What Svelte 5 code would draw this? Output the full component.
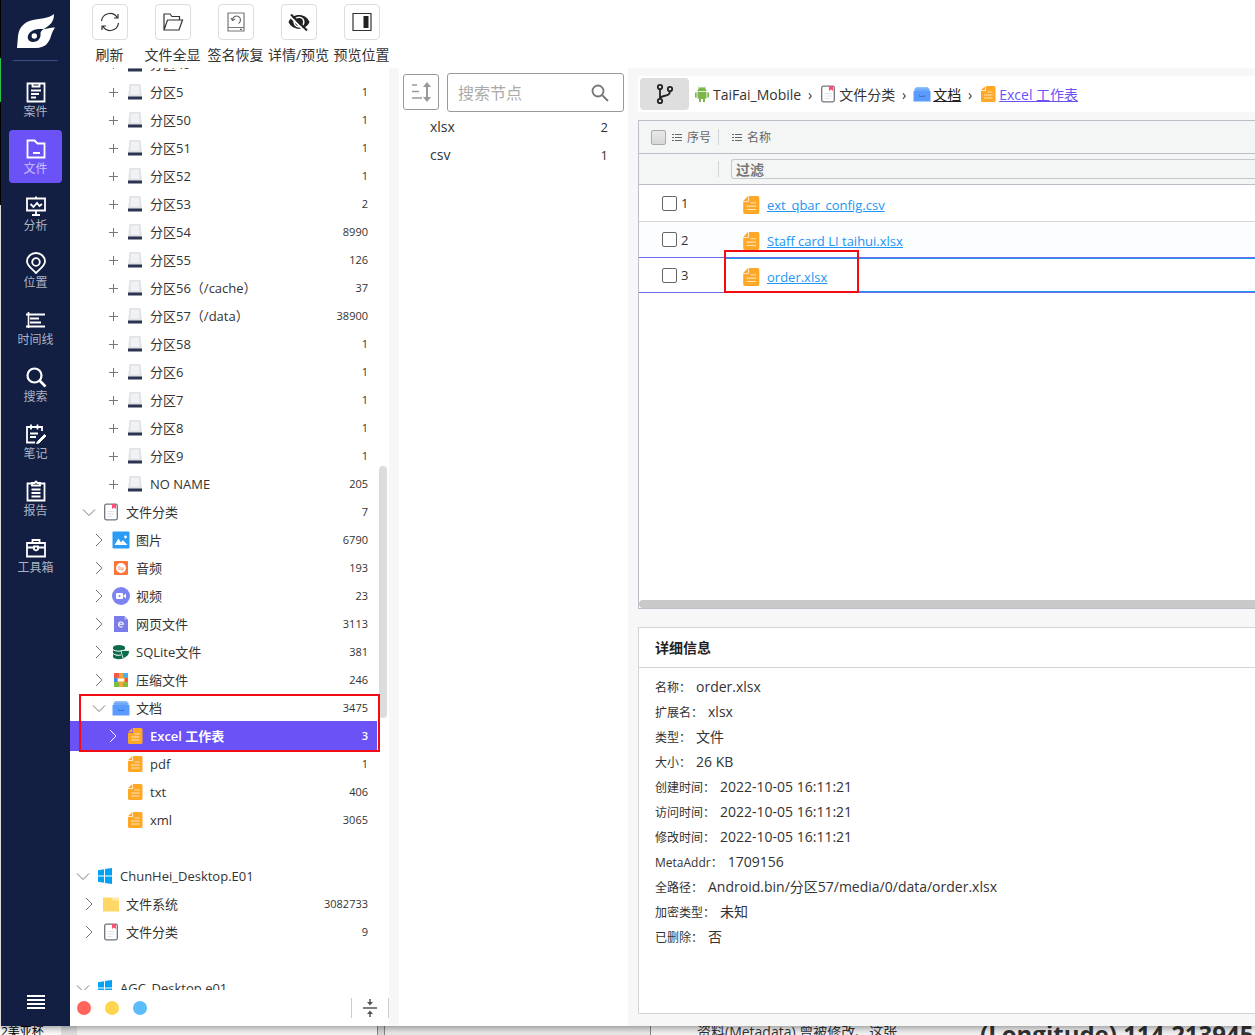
<script>
  const navItems = [
    { label: '案件', icon: 'case' },
    { label: '文件', icon: 'file' },
    { label: '分析', icon: 'analysis' },
    { label: '位置', icon: 'location' },
    { label: '时间线', icon: 'timeline' },
    { label: '搜索', icon: 'search' },
    { label: '笔记', icon: 'note' },
    { label: '报告', icon: 'report' },
    { label: '工具箱', icon: 'toolbox' },
  ];

  const tools = [
    { label: '刷新', icon: 'refresh' },
    { label: '文件全显', icon: 'openFolder' },
    { label: '签名恢复', icon: 'restore' },
    { label: '详情/预览', icon: 'eyeOff' },
    { label: '预览位置', icon: 'panel' },
  ];

  const part = (label, count) => ({ label, count, icon: 'disk', depth: 3, arrow: 'plus' });

  const tree = [
    part('分区49', ''),
    part('分区5', '1'),
    part('分区50', '1'),
    part('分区51', '1'),
    part('分区52', '1'),
    part('分区53', '2'),
    part('分区54', '8990'),
    part('分区55', '126'),
    part('分区56（/cache）', '37'),
    part('分区57（/data）', '38900'),
    part('分区58', '1'),
    part('分区6', '1'),
    part('分区7', '1'),
    part('分区8', '1'),
    part('分区9', '1'),
    part('NO NAME', '205'),
    { label: '文件分类', count: '7', icon: 'category', depth: 1, arrow: 'down' },
    { label: '图片', count: '6790', icon: 'image', depth: 2, arrow: 'right' },
    { label: '音频', count: '193', icon: 'audio', depth: 2, arrow: 'right' },
    { label: '视频', count: '23', icon: 'video', depth: 2, arrow: 'right' },
    { label: '网页文件', count: '3113', icon: 'web', depth: 2, arrow: 'right' },
    { label: 'SQLite文件', count: '381', icon: 'sqlite', depth: 2, arrow: 'right' },
    { label: '压缩文件', count: '246', icon: 'archive', depth: 2, arrow: 'right' },
    { label: '文档', count: '3475', icon: 'docs', depth: 2, arrow: 'down' },
    { label: 'Excel 工作表', count: '3', icon: 'doc', depth: 3, arrow: 'right', marked: true },
    { label: 'pdf', count: '1', icon: 'doc', depth: 3 },
    { label: 'txt', count: '406', icon: 'doc', depth: 3 },
    { label: 'xml', count: '3065', icon: 'doc', depth: 3 },
    null,
    { label: 'ChunHei_Desktop.E01', count: '', icon: 'windows', depth: 0, arrow: 'down' },
    { label: '文件系统', count: '3082733', icon: 'folder', depth: 1, arrow: 'right' },
    { label: '文件分类', count: '9', icon: 'category', depth: 1, arrow: 'right' },
    null,
    { label: 'AGC_Desktop.e01', count: '', icon: 'windows', depth: 0, arrow: 'down' },
  ];

  const nodes = [
    { label: 'xlsx', count: 2 },
    { label: 'csv', count: 1 },
  ];

  const files = [
    { id: 1, name: 'ext_qbar_config.csv' },
    { id: 2, name: 'Staff card LI taihui.xlsx' },
    { id: 3, name: 'order.xlsx', current: true },
  ];

  const details = [
    ['名称', 'order.xlsx'],
    ['扩展名', 'xlsx'],
    ['类型', '文件'],
    ['大小', '26 KB'],
    ['创建时间', '2022-10-05 16:11:21'],
    ['访问时间', '2022-10-05 16:11:21'],
    ['修改时间', '2022-10-05 16:11:21'],
    ['MetaAddr', '1709156'],
    ['全路径', 'Android.bin/分区57/media/0/data/order.xlsx'],
    ['加密类型', '未知'],
    ['已删除', '否'],
  ];

  let activeNav = $state('文件');
  let selected = $state('Excel 工作表');
</script>

{#snippet navIcon(name)}
  <svg class="nav-icon" viewBox="0 0 22 22" width="22" height="22" fill="none" stroke="currentColor" stroke-width="1.8">
    {#if name === 'case'}
      <path d="M2.5 2.5h17v18h-17z M7.5 2v3.5h7V2 M6 9.5h10 M6 13h8 M6 16.5h5" />
    {:else if name === 'file'}
      <path d="M2.5 2.5h7l3 3h7v14h-17z M8 15h7" />
    {:else if name === 'analysis'}
      <path d="M2 3.5h18v12H2z M11 1.5v2 M11 15.5v4 M7 20h8 M5.5 9l3 3 3.5-4 2.5 3 2.5-2" />
    {:else if name === 'location'}
      <path d="M11 21C7 17 2 13.500 2 9.500a9 8.500 0 0 1 18 0C20 13.500 15 17 11 21z" />
      <circle cx="11" cy="10" r="3.800" />
    {:else if name === 'timeline'}
      <path d="M3.500 3v16" stroke-width="1.600" />
      <path d="M1 5.500h19 M5 9.500h9 M5 13.500h11 M1 17.500h19" stroke-width="2.200" />
    {:else if name === 'search'}
      <circle cx="9.500" cy="9.500" r="7" stroke-width="2.200" />
      <path d="M14.500 14.500l6 6" stroke-width="2.600" />
    {:else if name === 'note'}
      <path d="M17 8V4H2v15.500h8 M6 1.500v5 M12.500 1.500v5 M5 10.500h8 M5 14h6" />
      <path d="M19.500 11.500l-7 7-1 2 2.500-.5 7-7z" fill="currentColor" stroke-width="1" />
    {:else if name === 'report'}
      <path d="M7 3.500H2.500v17h17v-17H15 M7 5.500V3h2.500l1.500-1.500L12.500 3H15v2.500z M6.500 9.500h9 M6.500 13h9 M6.500 16.500h9" />
    {:else if name === 'toolbox'}
      <path d="M2 6h18v13.500H2z M7.500 6V3h7v3 M2 10.500h7 M13 10.500h7 M9 9.500h4v3l-2 1-2-1z" />
    {/if}
  </svg>
{/snippet}

{#snippet toolIcon(name)}
  <svg viewBox="0 0 22 22" width="22" height="22" fill="none" stroke="#333" stroke-width="1.200">
    {#if name === 'refresh'}
      <path d="M2.500 10A8.500 8.500 0 0 1 18 6.300 M19.500 12A8.500 8.500 0 0 1 4 15.700 M19 3v4h-4 M3 19v-4h4" />
    {:else if name === 'openFolder'}
      <path d="M2 19V3h6l2 2.500h7.500V9 M2 19L5.500 9H20.500L17 19z" />
    {:else if name === 'restore'}
      <path d="M3 2h16v18H3z M3 16.500h16" stroke="#777" />
      <path d="M7.500 9a4 4 0 1 1 6 3.500 M6 7l1.500 2.500L10 8 M15 18.300h2" stroke="#666" />
    {:else if name === 'eyeOff'}
      <path d="M0.500 11C4 1.500 18 1.500 21.500 11 18 20 4 20 0.500 11z" fill="#222" stroke="none" />
      <circle cx="11" cy="11" r="4.800" fill="#222" stroke="#fff" stroke-width="1.600" />
      <path d="M1.500 5L17.500 21" stroke="#fff" stroke-width="1.800" />
      <path d="M3 3.500L19 19.500" stroke="#222" stroke-width="2" />
    {:else if name === 'panel'}
      <path d="M2 2.500h18v17H2z" />
      <path d="M12.500 5h5v12h-5z" fill="#222" stroke="none" />
    {/if}
  </svg>
{/snippet}

{#snippet icon(name)}
  <svg class="icon" viewBox="0 0 18 18" width="18" height="18">
    {#if name === 'disk'}
      <path d="M3.500 1h11L16 14H2z" fill="#dfe2e6" />
      <path d="M5 2.500h8l.5 9h-9z" fill="#f1f2f4" />
      <path d="M2 13.500h14V16.500H2z" fill="#2c3550" />
    {:else if name === 'category'}
      <rect x="2.700" y="1.200" width="12.600" height="15.600" rx="1.500" fill="#fff" stroke="#70757d" stroke-width="1.300" />
      <path d="M10 1h4v5l-2-1.500L10 6z" fill="#ff4d73" />
      <path d="M5.500 8.500h7 M5.500 11h7 M5.500 13.500h5" stroke="#dfe3ea" />
    {:else if name === 'image'}
      <rect x="0.500" y="0.500" width="17" height="17" rx="1" fill="#2b9cf5" />
      <path d="M2.500 14l4-6.500 2.500 4 1.800-2.500L15.500 14z" fill="#fff" />
      <circle cx="13.500" cy="6" r="1.400" fill="#fff" />
    {:else if name === 'audio'}
      <rect x="2" y="2" width="14" height="14" rx="1" fill="#fb7438" />
      <circle cx="9" cy="9" r="5" fill="#fff" />
      <path d="M7 7v4 M9 8v3h2V8.500" stroke="#fb9a70" fill="none" />
    {:else if name === 'video'}
      <circle cx="9" cy="9" r="9" fill="#7b83f0" />
      <rect x="4" y="6" width="7" height="6" rx="1" fill="#fff" />
      <path d="M11 9l3-2.500v5z" fill="#fff" />
      <circle cx="7.500" cy="9" r="1" fill="#7b83f0" />
    {:else if name === 'web'}
      <path d="M2 1h10.500L16 4.500V17H2z" fill="#7b7ce9" />
      <path d="M12.500 1L16 4.500h-3.500z" fill="#b9baf5" />
      <path d="M6.500 9.300h5a2.500 2.500 0 1 0-1 2.200" fill="none" stroke="#fff" stroke-width="1.100" />
    {:else if name === 'sqlite'}
      <path d="M1 4.500v9C1 17 12 17 13 14V4.500z" fill="#0b6b4a" />
      <ellipse cx="7" cy="4.500" rx="6" ry="2.500" fill="#0b6b4a" />
      <path d="M1 6.500c2 2.200 10 2.200 12 0 M1 10.500c2 2 6 2 8 1.500" fill="none" stroke="#fff" />
      <path d="M9 7.500h8.500c0 4-2 6.500-6.500 8z" fill="#0b6b4a" stroke="#fff" stroke-width="0.800" />
    {:else if name === 'archive'}
      <path d="M2 2h5v5H2z" fill="#f2594b" />
      <path d="M11 2h5v5h-5z" fill="#4daef0" />
      <path d="M2 7h5v4H2z" fill="#4a86e8" />
      <path d="M11 7h5v4h-5z" fill="#f2594b" />
      <path d="M2 11h14v5H2z" fill="#7cbf3f" />
      <path d="M7 2h4v14H7z" fill="#f6a93b" />
      <rect x="5.500" y="7" width="7" height="4" fill="#fff" stroke="#f29a2e" />
    {:else if name === 'docs'}
      <path d="M3 2h12l1 4H2z" fill="#8fc1ff" />
      <path d="M1.500 3.500h15V7h-15z" fill="#6fa9f7" />
      <path d="M0.500 6h17v10.500H.500z" fill="#5a9bff" />
      <path d="M6.500 10v1.500h5V10" stroke="#3d74cf" fill="none" />
    {:else if name === 'doc'}
      <path d="M7 1h8a1.500 1.500 0 0 1 1.500 1.500v13A1.500 1.500 0 0 1 15 17H3.500A1.500 1.500 0 0 1 2 15.500V6h5z" fill="#ffa726" />
      <path d="M2 5.300L6.300 1v4.300z" fill="#ffa726" />
      <path d="M8.500 7h5 M5 10h8.500 M5 13h8.500" stroke="#ffe3b8" />
    {:else if name === 'windows'}
      <path d="M2 3.200l6-.9V8.500H2z M9 2.100l7-1.100v7.500H9z M2 9.500h6v6.200l-6-.9z M9 9.500h7V17l-7-1.100z" fill="#00a2f5" />
    {:else if name === 'folder'}
      <path d="M1 2.500h8l2 2h6v12H1z" fill="#ffd766" />
      <path d="M9 2.500h8v3h-6z" fill="#ffe9a6" />
    {:else if name === 'android'}
      <path d="M4.500 7h9v6.500h-1.500V17h-2v-3H8v3H6v-3.500H4.500z M2 7.500h1.700v5H2z M14.300 7.500H16v5h-1.700z M4.500 6.200a4.500 4 0 0 1 9 0z" fill="#7ab648" />
      <path d="M5.500 1.500l1.200 2 M12.500 1.500l-1.200 2" stroke="#7ab648" stroke-width="0.800" />
    {/if}
  </svg>
{/snippet}

{#snippet arrowIcon(kind)}
  <svg class="arrow" viewBox="0 0 16 16" width="16" height="16" fill="none" stroke="currentColor">
    {#if kind === 'plus'}
      <path d="M4 8.500h9 M8.500 4v9" />
    {:else if kind === 'down'}
      <path d="M2 5.500l6 6 6-6" />
    {:else if kind === 'right'}
      <path d="M5 2l6 6-6 6" />
    {/if}
  </svg>
{/snippet}

{#snippet listIcon()}
  <svg viewBox="0 0 10 9" width="10" height="9" stroke="#666">
    <path d="M0 1.500h2 M3 1.500h7 M0 4.500h2 M3 4.500h7 M0 7.500h2 M3 7.500h7" />
  </svg>
{/snippet}

<div class="desktop">
  <div class="window">
    <nav class="sidebar">
      <svg class="logo" viewBox="0 0 40 36" width="40" height="36">
        <path d="M38 1C33 6 23 5 15 7.500 7 10 3 15 2 23L1 35h19c9 0 13-5 15-12 1-4 3-7 4-8.500-4-.5-7 1.500-11.500 1.500C34 12.500 38 9 38 1z" fill="#fff" />
        <path d="M28 16c-8-.5-14 1-16 6.500-1 3.500 1 6.500 5 6.500 5.500 0 8-4.500 7.500-8C24.300 19 25.500 17 28 16z" fill="#121f42" />
        <circle cx="18.300" cy="23" r="2.700" fill="#fff" />
      </svg>
      <ul>
        {#each navItems as item}
          <li>
            <button class="nav-item" class:active={activeNav === item.label} onclick={() => (activeNav = item.label)}>
              {@render navIcon(item.icon)}
              <span>{item.label}</span>
            </button>
          </li>
        {/each}
      </ul>
      <button class="burger" aria-label="菜单"><i></i><i></i><i></i><i></i></button>
    </nav>

    <div class="content">
      <header class="toolbar">
        {#each tools as tool}
          <button class="tool">
            <span class="tool-box">{@render toolIcon(tool.icon)}</span>
            <span class="tool-label">{tool.label}</span>
          </button>
        {/each}
      </header>

      <div class="panes">
        <section class="tree-pane">
          <div class="tree-scroll">
            <ul class="tree">
              {#each tree as row}
                {#if row}
                  <li>
                    <button
                      class="row depth-{row.depth}"
                      class:selected={selected === row.label}
                      onclick={() => (selected = row.label)}
                    >
                      {@render arrowIcon(row.arrow)}
                      {@render icon(row.icon)}
                      <span class="name">{row.label}</span>
                      <span class="count">{row.count}</span>
                      {#if row.marked}<span class="mark"></span>{/if}
                    </button>
                  </li>
                {:else}
                  <li class="blank"></li>
                {/if}
              {/each}
            </ul>
            <div class="track"><div class="thumb"></div></div>
          </div>
          <footer class="tree-footer">
            <span class="dot red"></span>
            <span class="dot yellow"></span>
            <span class="dot blue"></span>
            <button class="collapse" aria-label="折叠">
              <svg viewBox="0 0 16 20" width="16" height="20" fill="#555">
                <path d="M1 9.300h14v1.500H1z M7.300 1h1.500v3H11L8 7.500 5 4h2.300z M7.300 19h1.500v-3H11L8 12.500 5 16h2.300z" />
              </svg>
            </button>
          </footer>
        </section>

        <section class="node-pane">
          <div class="node-search">
            <button class="sort" aria-label="排序">
              <svg viewBox="0 0 22 22" width="22" height="22" fill="none" stroke="#999" stroke-width="1.500">
                <path d="M2 4h5 M2 10.500h7 M2 17h10" />
                <path d="M17 4v14" stroke-width="2" />
                <path d="M13 6l4-5 4 5z M13 16l4 5 4-5z" fill="#999" stroke="none" />
              </svg>
            </button>
            <label class="search-box">
              <input type="text" placeholder="搜索节点" aria-label="搜索节点" />
              <svg viewBox="0 0 18 18" width="18" height="18" fill="none" stroke="#777" stroke-width="1.800">
                <circle cx="7" cy="7" r="5.500" />
                <path d="M11 11l6 6" />
              </svg>
            </label>
          </div>
          <ul class="nodes">
            {#each nodes as node}
              <li><span>{node.label}</span><span class="total">{node.count}</span></li>
            {/each}
          </ul>
        </section>

        <main>
          <div class="crumbs">
            <button class="branch" aria-label="路径">
              <svg viewBox="0 0 20 22" width="20" height="22" fill="none" stroke="#222" stroke-width="1.800">
                <circle cx="5" cy="4" r="2.200" />
                <circle cx="5" cy="18" r="2.200" />
                <circle cx="15" cy="6" r="2.200" />
                <path d="M5 6v10 M15 8c0 4-3 4.500-6 5-2 .3-3.500 1-4 3" />
              </svg>
            </button>
            {@render icon('android')}<span>TaiFai_Mobile</span><span class="sep">›</span>
            {@render icon('category')}<span>文件分类</span><span class="sep">›</span>
            {@render icon('docs')}<a href="#docs">文档</a><span class="sep">›</span>
            {@render icon('doc')}<a class="here" href="#excel">Excel 工作表</a>
          </div>

          <div class="table-box">
            <table>
              <colgroup><col class="col-index" /><col /></colgroup>
              <thead>
                <tr class="head">
                  <th>
                    <div class="head-cell first">
                      <input class="check-all" type="checkbox" aria-label="全选" />{@render listIcon()}<span>序号</span>
                    </div>
                  </th>
                  <th><div class="head-cell">{@render listIcon()}<span>名称</span></div></th>
                </tr>
                <tr class="filter">
                  <td><div class="head-cell first"></div></td>
                  <td><input type="text" placeholder="过滤" aria-label="过滤" /></td>
                </tr>
              </thead>
              <tbody>
                {#each files as file}
                  <tr class:current={file.current}>
                    <td>
                      <label class="index"><input type="checkbox" />{file.id}</label>
                    </td>
                    <td>
                      <div class="file">
                        {@render icon('doc')}
                        <a href="#{file.name}">{file.name}</a>
                      </div>
                      {#if file.current}<span class="mark"></span>{/if}
                    </td>
                  </tr>
                {/each}
              </tbody>
            </table>
            <div class="hscroll"></div>
          </div>

          <section class="details">
            <h2>详细信息</h2>
            <dl>
              {#each details as [key, value]}
                <div><dt>{key}：</dt><dd>{value}</dd></div>
              {/each}
            </dl>
          </section>
        </main>
      </div>
    </div>
  </div>

  <div class="behind">
    <span class="doc-title">2美亚杯</span>
    <span class="sheet"></span>
    <span class="page">资料(Metadata) 曾被修改、这张</span>
    <span class="heading">(Longitude) 114.213945</span>
  </div>
</div>

<style>
  :global(body) {
    margin: 0;
  }

  .desktop {
    display: flex;
    flex-direction: column;
    height: 100vh;
    overflow: hidden;
    font-family: 'Open Sans', 'Noto Sans CJK SC', sans-serif;
    font-size: 13px;
    color: #333;
    background: #f8f8f8;
  }

  .desktop * {
    box-sizing: border-box;
  }

  ul,
  dl,
  dd,
  h2 {
    margin: 0;
    padding: 0;
    list-style: none;
  }

  button,
  input {
    font: inherit;
    color: inherit;
    margin: 0;
  }

  button {
    padding: 0;
    border: 0;
    background: none;
    cursor: pointer;
  }

  svg {
    display: block;
    flex: none;
  }

  .window {
    display: flex;
    flex: 1;
    min-height: 0;
    background: #fff;
    box-shadow: 0 0 10px rgba(0, 0, 0, 0.6);
    z-index: 1;
  }

  .sidebar {
    display: flex;
    flex-direction: column;
    align-items: center;
    flex: none;
    width: 70px;
    padding: 13px 0 17px 1px;
    background: linear-gradient(#000 58px, #2fc04a 58px, #2fc04a 102px, #000 102px, #000 205px, #ddd 205px) left / 1px 100% no-repeat #121f42;
  }

  .logo {
    margin-bottom: 11px;
  }

  .sidebar ul {
    display: flex;
    flex-direction: column;
    gap: 4px;
    flex: 1;
    width: 45px;
    padding-top: 12px;
    border-top: 1px solid #3c4a86;
  }

  .nav-item {
    display: flex;
    flex-direction: column;
    align-items: center;
    gap: 1px;
    width: 53px;
    height: 53px;
    margin-left: -4px;
    padding-top: 8px;
    border-radius: 4px;
    font-size: 12px;
    line-height: 16px;
    color: #fff;
  }

  .nav-item span {
    color: #adb3c2;
  }

  .nav-item.active {
    background: #6b52f6;
  }

  .nav-item.active span {
    color: #c9c1fb;
  }

  .burger {
    display: flex;
    flex-direction: column;
    gap: 2px;
    width: 18px;
  }

  .burger i {
    height: 2px;
    background: #fff;
  }

  .content {
    display: flex;
    flex-direction: column;
    flex: 1;
    min-width: 0;
  }

  .toolbar {
    display: flex;
    flex: none;
    height: 68px;
    padding: 4px 0 0 8px;
  }

  .tool {
    display: flex;
    flex-direction: column;
    align-items: center;
    gap: 5px;
    width: 63px;
  }

  .tool-box {
    display: flex;
    align-items: center;
    justify-content: center;
    width: 36px;
    height: 36px;
    border: 1px solid #ddd;
    border-radius: 4px;
  }

  .tool-label {
    font-size: 14px;
    line-height: 20px;
    white-space: nowrap;
  }

  .panes {
    display: flex;
    flex: 1;
    min-height: 0;
    background: #f7f7f7;
  }

  .tree-pane {
    display: flex;
    flex-direction: column;
    flex: none;
    width: 319px;
    margin-right: 10px;
    background: #fff;
  }

  .tree-scroll {
    display: flex;
    flex: 1;
    min-height: 0;
    overflow: hidden;
  }

  .tree {
    flex: 1;
    margin-top: -18px;
  }

  .row {
    display: flex;
    align-items: center;
    position: relative;
    width: 100%;
    height: 28px;
    padding-right: 9px;
    text-align: left;
    line-height: 16px;
  }

  .blank {
    height: 28px;
  }

  .depth-0 {
    padding-left: 5px;
  }

  .depth-1 {
    padding-left: 11px;
  }

  .depth-2 {
    padding-left: 21px;
  }

  .depth-3 {
    padding-left: 35px;
  }

  .arrow {
    margin-right: 5px;
    color: #777;
  }

  .row .icon {
    margin-right: 6px;
  }

  .name {
    flex: 1;
    white-space: nowrap;
  }

  .count {
    font-size: 11px;
  }

  .row.selected {
    height: 30px;
    margin: -1px 0;
    background: #6b52f6;
    color: #fff;
    font-weight: 600;
  }

  .selected .arrow {
    color: #fff;
  }

  .mark {
    position: absolute;
    z-index: 2;
    border: 2px solid #f30b13;
    pointer-events: none;
  }

  .row .mark {
    inset: -27px -3px -1px 9px;
  }

  .track {
    flex: none;
    width: 12px;
    padding: 398px 2px 0;
  }

  .thumb {
    height: 252px;
    border-radius: 4px;
    background: #dcdcdc;
  }

  .tree-footer {
    display: flex;
    align-items: center;
    flex: none;
    gap: 14px;
    height: 36px;
    padding-left: 7px;
  }

  .dot {
    width: 14px;
    height: 14px;
    border-radius: 50%;
  }

  .red {
    background: #ff655b;
  }

  .yellow {
    background: #ffd54f;
  }

  .blue {
    background: #5bbcfa;
  }

  .collapse {
    display: flex;
    justify-content: center;
    width: 38px;
    margin-left: auto;
    border: 1px solid #ccc;
    border-width: 0 1px;
  }

  .node-pane {
    flex: none;
    width: 229px;
    padding: 5px 4px;
    background: #fff;
  }

  .node-search {
    display: flex;
    gap: 8px;
  }

  .sort {
    display: flex;
    align-items: center;
    justify-content: center;
    flex: none;
    width: 36px;
    height: 36px;
    margin-top: 1px;
    border: 1px solid #999;
    border-radius: 3px;
  }

  .search-box {
    display: flex;
    align-items: center;
    flex: 1;
    height: 39px;
    padding: 0 14px 0 10px;
    border: 1px solid #999;
    border-radius: 3px;
  }

  .search-box input {
    flex: 1;
    width: 0;
    padding: 0;
    border: 0;
    outline: 0;
    background: none;
    font-size: 16px;
  }

  .search-box input::placeholder {
    color: #aaa;
  }

  .nodes {
    padding-top: 1px;
  }

  .nodes li {
    display: flex;
    justify-content: space-between;
    padding: 0 16px 0 27px;
    line-height: 28px;
    font-size: 14px;
  }

  .total {
    font-size: 13px;
  }

  main {
    display: flex;
    flex-direction: column;
    flex: 1;
    min-width: 0;
    padding: 8px 0 12px 10px;
  }

  .crumbs {
    display: flex;
    align-items: center;
    flex: none;
    height: 36px;
    padding-left: 2px;
    background: #fff;
    font-size: 14px;
    white-space: nowrap;
  }

  .crumbs a {
    color: #222;
    text-decoration: underline;
  }

  .crumbs a.here {
    color: #6b52f6;
  }

  .crumbs .icon {
    margin-right: 2px;
  }

  .branch {
    display: flex;
    align-items: center;
    justify-content: center;
    width: 49px;
    height: 32px;
    margin-right: 4px;
    border-radius: 4px;
    background: #dedede;
  }

  .sep {
    width: 18px;
    text-align: center;
  }

  .table-box {
    display: flex;
    flex-direction: column;
    flex: none;
    height: 489px;
    margin-top: 8px;
    border: 1px solid #babfc7;
    border-right: 0;
    background: #fff;
  }

  table {
    width: 100%;
    table-layout: fixed;
    border-spacing: 0;
    font-size: 13px;
  }

  .col-index {
    width: 86px;
  }

  th,
  td {
    padding: 0;
    text-align: left;
    font-weight: 400;
  }

  .head th,
  .filter td {
    height: 33px;
    border-bottom: 1px solid #babfc7;
    background: #f4f6f6;
    color: #666;
    font-size: 12px;
  }

  .filter td {
    height: 31px;
  }

  .head-cell {
    display: flex;
    align-items: center;
    gap: 5px;
    height: 16px;
    padding-left: 7px;
  }

  .head-cell.first {
    margin-right: 6px;
    padding-left: 12px;
    border-right: 1px solid #d3d6d9;
  }

  .check-all {
    appearance: none;
    width: 15px;
    height: 15px;
    margin-right: 1px;
    border: 1px solid #aaa;
    border-radius: 2px;
    background: linear-gradient(#e8e8e8, #d8d8d8);
  }

  .filter input {
    display: block;
    width: calc(100% - 6px);
    height: 20px;
    margin-left: 6px;
    padding: 0 4px;
    border: 1px solid #c6c9cc;
    border-right: 0;
    border-radius: 3px 0 0 3px;
    background: #f4f6f6;
    font-size: 14px;
  }

  .filter input::placeholder {
    color: #777;
    font-weight: 700;
  }

  tbody td {
    position: relative;
    height: 37px;
    border-bottom: 1px solid #d5d8db;
  }

  tbody tr:nth-child(2) td {
    height: 36px;
    border-bottom-color: #6c6cf0;
    background: #fbfdff;
  }

  tbody tr.current td {
    height: 35px;
    border-bottom-color: #6c6cf0;
  }

  tbody tr.current td + td {
    box-shadow: inset 0 1px #1b96ea, inset 0 -1px #1b96ea;
  }

  .index {
    display: flex;
    align-items: center;
    gap: 4px;
    padding-left: 23px;
    line-height: 16px;
  }

  .index input {
    appearance: none;
    width: 15px;
    height: 15px;
    border: 1px solid #666;
    border-radius: 2px;
    background: #fff;
  }

  .index input:checked {
    background: #6b52f6;
  }

  .file {
    display: flex;
    align-items: center;
    gap: 6px;
    padding: 3px 0 0 16px;
  }

  .file .icon {
    width: 20px;
    height: 22px;
  }

  .file a {
    color: #2196f3;
    text-decoration: underline;
  }

  td .mark {
    inset: -8px auto -1px -1px;
    width: 135px;
  }

  .hscroll {
    height: 8px;
    margin-top: auto;
    border-radius: 4px 0 0 4px;
    background: #c9c9c9;
  }

  .details {
    flex: 1;
    margin-top: 18px;
    border: 1px solid #d2d4d6;
    border-right: 0;
    background: #fff;
  }

  h2 {
    height: 40px;
    padding-left: 16px;
    border-bottom: 1px solid #d2d4d6;
    font-size: 14px;
    line-height: 40px;
    color: #222;
  }

  dl {
    padding: 7px 16px;
  }

  dl div {
    display: flex;
    align-items: baseline;
    gap: 5px;
    height: 25px;
    line-height: 24px;
  }

  dt {
    font-size: 12px;
  }

  dd {
    font-size: 14px;
  }

  .behind {
    display: flex;
    flex: none;
    height: 9px;
    overflow: hidden;
    white-space: nowrap;
    font-size: 14px;
    line-height: 12px;
  }

  .doc-title {
    width: 77px;
    padding-left: 1px;
    border-right: 16px solid #e4e4e4;
    background: #fff;
    font-size: 12px;
    color: #000;
  }

  .sheet {
    width: 574px;
    background: linear-gradient(90deg, #fafafa 300px, #888 300px, #888 301px, #ddd 301px, #ddd 307px, #888 307px, #888 308px, #eee 308px);
    border-right: 1px solid #888;
  }

  .page {
    width: 245px;
    padding-left: 46px;
    border-right: 1px solid #ddd;
  }

  .heading {
    padding-left: 84px;
    font-size: 24px;
    line-height: 16px;
    font-weight: 700;
  }
</style>
